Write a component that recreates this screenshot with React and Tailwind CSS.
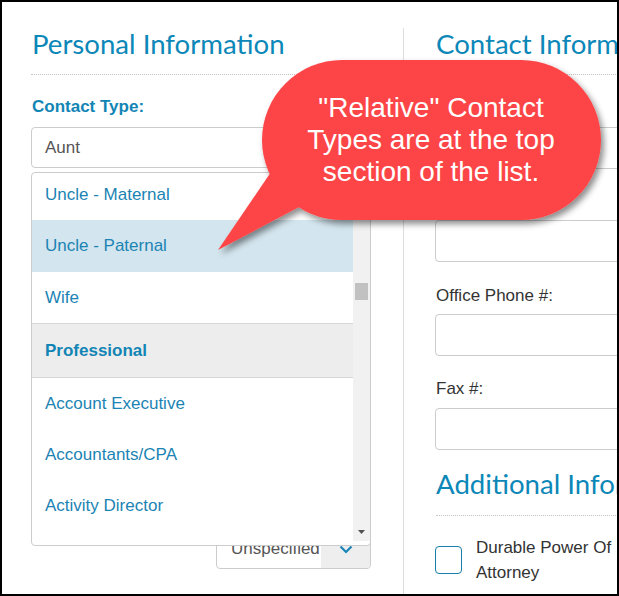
import React from "react";

function Row({ children, className = "" }) {
  return (
    <div className={`flex items-center pl-[13px] text-[17px] text-[#1b84b4] ${className}`}>
      {children}
    </div>
  );
}

function Label({ children, className = "" }) {
  return <div className={`h-[20px] text-[17px] leading-[20px] text-[#333] ${className}`}>{children}</div>;
}

function Input({ className = "" }) {
  return <div className={`h-[42px] w-[340px] rounded-[4px] border border-[#ccc] bg-white ${className}`} />;
}

export default function App() {
  return (
    <div className="relative h-[596px] w-[619px] overflow-hidden border-2 border-black bg-white font-['Liberation_Sans',Arial,sans-serif]">
      <div className="flex h-full">
        {/* Left column */}
        <div className="w-[401px] shrink-0 pl-[29px] pr-[32px] pt-[26px]">
          <h2 className="border-b border-dotted border-[#c4c4c4] pb-[14px] pl-px font-['Lato',sans-serif] text-[27.6px] leading-[32px] text-[#0b87b8]">
            Personal Information
          </h2>
          <div className="mt-[22px] pl-px text-[17px] font-bold leading-[20px] text-[#1285b5]">Contact Type:</div>
          <div className="relative mt-[10px]">
            <div className="flex h-[41px] w-[340px] items-center rounded-[4px] border border-[#ccc] pl-[13px] text-[17px] text-[#555]">
              Aunt
            </div>
            {/* open dropdown */}
            <div className="absolute left-0 top-[45px] z-10 h-[374px] w-[340px] overflow-hidden rounded-[4px] border border-[#ccc] bg-white">
              <div className="relative h-full">
                <div className="w-[321px]">
                  <Row className="-mt-[4px] h-[51px]">Uncle - Maternal</Row>
                  <Row className="h-[52px] bg-[#d3e5ee]">Uncle - Paternal</Row>
                  <Row className="h-[51px]">Wife</Row>
                  <Row className="h-[55px] border-y border-[#d6d6d6] bg-[#ededed] font-bold text-[#1285b5]">Professional</Row>
                  <Row className="h-[51px]">Account Executive</Row>
                  <Row className="h-[51px]">Accountants/CPA</Row>
                  <Row className="h-[52px]">Activity Director</Row>
                </div>
                <div className="absolute bottom-0 right-0 top-0 w-[17px] bg-[#f1f1f1]">
                  <div className="absolute left-[2px] top-[114px] h-[17px] w-[13px] bg-[#c1c1c1]" />
                  <svg className="absolute left-[5px] top-[361px]" width="7" height="4" viewBox="0 0 7 4">
                    <polygon points="0,0 7,0 3.5,4" fill="#505050" />
                  </svg>
                </div>
              </div>
            </div>
          </div>
          <div className="mt-[361px] flex justify-end">
            <div className="flex h-[40px] w-[155px] overflow-hidden rounded-[4px] border border-[#ccc]">
              <div className="flex flex-1 items-center pl-[14px] text-[17px] text-[#555]">Unspecified</div>
              <div className="flex w-[49px] items-center justify-center bg-[#eee]">
                <svg width="14" height="9" viewBox="0 0 14 9">
                  <polyline points="1.5,1.5 7,7 12.5,1.5" fill="none" stroke="#1a86b8" strokeWidth="2.2" />
                </svg>
              </div>
            </div>
          </div>
        </div>

        {/* Right column */}
        <div className="mt-[26px] min-w-0 flex-1 overflow-hidden border-l border-[#ddd] pl-[32px]">
          <h2 className="w-[400px] whitespace-nowrap border-b border-dotted border-[#c4c4c4] pb-[14px] font-['Lato',sans-serif] text-[27.6px] leading-[32px] text-[#0b87b8]">
            Contact Information
          </h2>
          <Label className="mt-[22px]" />
          <Input className="-ml-px mt-[10px]" />
          <Label className="mt-[21px]" />
          <Input className="-ml-px mt-[10px]" />
          <Label className="mt-[24px]">Office Phone #:</Label>
          <Input className="-ml-px mt-[8px]" />
          <Label className="mt-[23px]">Fax #:</Label>
          <Input className="-ml-px mt-[9px]" />
          <h2 className="mt-[18px] w-[400px] whitespace-nowrap border-b border-dotted border-[#c4c4c4] pb-[15px] font-['Lato',sans-serif] text-[27.6px] leading-[32px] text-[#0b87b8]">
            Additional Information
          </h2>
          <div className="mt-[19px] flex items-center gap-[14px]">
            <div className="-ml-px h-[28px] w-[27px] shrink-0 rounded-[4px] border-[1.5px] border-[#1a7ea8]" />
            <div className="w-[150px] text-[17px] leading-[25px] text-[#333]">Durable Power Of Attorney</div>
          </div>
        </div>
      </div>

      {/* Callout bubble */}
      <svg
        className="pointer-events-none absolute left-[-2px] top-[-2px] z-20"
        width="619"
        height="596"
        viewBox="0 0 619 596"
      >
        <defs>
          <filter id="sh" x="-20%" y="-20%" width="140%" height="150%">
            <feDropShadow dx="3" dy="4" stdDeviation="3" floodColor="#000" floodOpacity="0.45" />
          </filter>
        </defs>
        <g filter="url(#sh)" fill="#fd4547">
          <rect x="262" y="60" width="339" height="160" rx="80" ry="80" />
          <polygon points="271,172 218,250 301,206" />
        </g>
      </svg>
      <div className="pointer-events-none absolute left-[279px] top-[90px] z-30 w-[300px] text-center text-[28px] leading-[32px] text-white">
        <div className="whitespace-nowrap">"Relative" Contact</div>
        <div className="whitespace-nowrap">Types are at the top</div>
        <div className="whitespace-nowrap">section of the list.</div>
      </div>
    </div>
  );
}
